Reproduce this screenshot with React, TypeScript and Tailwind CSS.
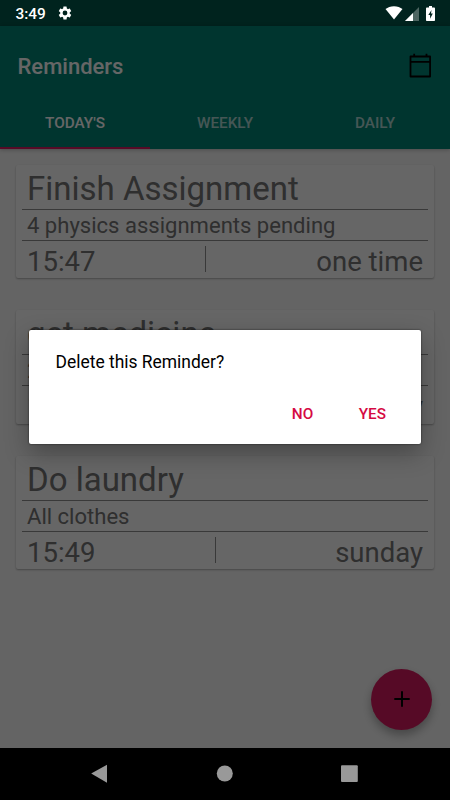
const reminders = [
    {
        title: "Finish Assignment",
        note: "4 physics assignments pending",
        time: "15:47",
        repeat: "one time",
    },
    {
        title: "get medicine",
        note: "2 tablets",
        time: "15:48",
        repeat: "daily",
    },
    {
        title: "Do laundry",
        note: "All clothes",
        time: "15:49",
        repeat: "sunday",
    },
];

const StatusBar = () => {
    return (
        <div className="relative z-20 h-[26px] flex items-center text-white pl-[15.5px] pr-[15.5px]">
            <span className="text-[15.4px] leading-none font-medium pt-[3px]">
                3:49
            </span>
            <svg
                className="w-4 h-4 ml-[11.5px]"
                viewBox="0 0 24 24"
                fill="currentColor"
            >
                <path d="M19.14 12.94c.04-.3.06-.61.06-.94 0-.32-.02-.64-.07-.94l2.03-1.58a.49.49 0 0 0 .12-.61l-1.92-3.32a.488.488 0 0 0-.59-.22l-2.39.96c-.5-.38-1.03-.7-1.62-.94l-.36-2.54a.484.484 0 0 0-.48-.41h-3.84c-.24 0-.43.17-.47.41l-.36 2.54c-.59.24-1.13.57-1.62.94l-2.39-.96c-.22-.08-.47 0-.59.22L2.74 8.87c-.12.21-.08.47.12.61l2.03 1.58c-.05.3-.09.63-.09.94s.02.64.07.94l-2.03 1.58a.49.49 0 0 0-.12.61l1.92 3.32c.12.22.37.29.59.22l2.39-.96c.5.38 1.03.7 1.62.94l.36 2.54c.05.24.24.41.48.41h3.84c.24 0 .44-.17.47-.41l.36-2.54c.59-.24 1.13-.56 1.62-.94l2.39.96c.22.08.47 0 .59-.22l1.92-3.32c.12-.22.07-.47-.12-.61l-2.01-1.58zM12 15.6A3.6 3.6 0 1 1 12 8.4a3.6 3.6 0 0 1 0 7.2z" />
            </svg>
            <div className="flex items-center ml-auto">
                <svg
                    className="w-[18px] h-[14px]"
                    viewBox="0 0 18 14"
                    fill="currentColor"
                >
                    <path d="M9 13.6 0.5 3.1C2.7 1.2 5.7 0.2 9 0.2s6.3 1 8.5 2.9z" />
                </svg>
                <svg
                    className="w-[14px] h-[14px] mt-px ml-[2px]"
                    viewBox="0 0 14 14"
                    fill="currentColor"
                >
                    <path d="M14 0v14H0z" opacity="0.3" />
                    <path d="M8 6v8H0z" />
                </svg>
                <svg
                    className="w-[9px] h-[15px] ml-[7px]"
                    viewBox="0 0 9 15"
                >
                    <path
                        d="M3 0h3v1.6h2.2q.8 0 .8.8v11.8q0 .8-.8.8H.8q-.8 0-.8-.8V2.4q0-.8.8-.8H3z"
                        fill="#fff"
                    />
                    <path d="M5.5 4 2.3 9h1.8v3.7L6.8 7.6H5z" fill="#00231e" />
                </svg>
            </div>
        </div>
    );
};

const ReminderCard = ({ title, note, time, repeat }: (typeof reminders)[0]) => {
    return (
        <div className="h-[113.5px] px-[6px] bg-white rounded-[2px] shadow-[0_1px_2px_rgba(0,0,0,0.3)] text-[#757575]">
            <h2 className="h-[45px] px-[5px] border-b border-[#8f8f8f] text-[33px] leading-[47.5px] whitespace-nowrap">
                {title}
            </h2>
            <p className="h-[31px] px-[5px] border-b border-[#8f8f8f] text-[22.05px] leading-[32.5px] whitespace-nowrap">
                {note}
            </p>
            <div className="h-[37px] px-[5px] flex justify-between items-center text-[27.5px] leading-[40px] whitespace-nowrap">
                <span className="pt-[5.5px]">{time}</span>
                <span className="w-px h-[26px] bg-[#8f8f8f]"></span>
                <span className="pt-[5.5px]">{repeat}</span>
            </div>
        </div>
    );
};

const App = () => {
    return (
        <div className="relative w-[450px] h-[800px] overflow-hidden flex flex-col bg-[#fafafa] font-['Roboto',sans-serif]">
            <div className="bg-[#00574b]">
                <StatusBar />
            </div>
            <header className="h-[122.5px] shrink-0 bg-[#008577] text-white shadow-[0_1px_4px_rgba(0,0,0,0.25)]">
                <div className="h-[70px] pt-[10px] pl-[17.5px] pr-[18px] flex items-center justify-between">
                    <h1 className="pt-px text-[22px] font-medium">Reminders</h1>
                    <svg
                        className="w-[23px] h-[25px] mt-[-1px] text-black"
                        viewBox="0 0 23 25"
                        fill="none"
                        stroke="currentColor"
                        strokeWidth="1.8"
                        strokeLinejoin="round"
                    >
                        <path d="M1.5 3.5h19.6v20H1.5z" />
                        <path d="M1.5 8.8h19.6M5.2 0.8v3M17.5 0.8v3" />
                    </svg>
                </div>
                <nav className="grid grid-cols-3 h-[52.5px] text-[15.3px] font-medium text-center leading-[55px]">
                    <span className="h-[52.5px] border-b-2 border-[#d81b60]">
                        TODAY'S
                    </span>
                    <span className="h-[52.5px] text-white/70">WEEKLY</span>
                    <span className="h-[52.5px] text-white/70">DAILY</span>
                </nav>
            </header>
            <main className="flex-1 flex flex-col gap-[32px] px-[16px] pt-[16.2px]">
                {reminders.map((reminder) => (
                    <ReminderCard key={reminder.title} {...reminder} />
                ))}
            </main>
            <button className="absolute right-[18px] bottom-[70.5px] w-[61px] h-[61px] rounded-full bg-[#d81b60] flex items-center justify-center shadow-[0_5px_10px_rgba(0,0,0,0.3)]">
                <svg
                    className="w-4 h-4"
                    viewBox="0 0 16 16"
                    stroke="#000"
                    strokeWidth="2"
                >
                    <path d="M8 0.3v15.4M0.3 8h15.4" />
                </svg>
            </button>
            <nav className="h-[52px] shrink-0 bg-black"></nav>

            {/* scrim */}
            <div className="absolute inset-0 z-10 bg-black/60"></div>

            {/* delete dialog */}
            <div className="absolute z-20 left-[29px] top-[329.5px] w-[392px] h-[114px] bg-white rounded-[2px] shadow-[0_0_2px_rgba(0,0,0,0.7),0_9px_24px_rgba(0,0,0,0.3)]">
                <p className="pl-[26.5px] pt-[19px] text-[17.45px] leading-[26px] text-black">
                    Delete this Reminder?
                </p>
                <div className="flex justify-end gap-[45.5px] pr-[35px] pt-[26px] text-[15.3px] leading-[26px] font-medium text-[#d50a43]">
                    <button>NO</button>
                    <button>YES</button>
                </div>
            </div>

            {/* system navigation */}
            <div className="absolute z-20 inset-x-0 bottom-0 h-[52px] text-[#999]">
                <svg
                    className="w-full h-full"
                    viewBox="0 0 450 52"
                    fill="currentColor"
                >
                    <path d="M91.2 25.5 107 16.7v18z" />
                    <circle cx="224.8" cy="25.5" r="8" />
                    <rect x="341" y="17.3" width="16.8" height="16.8" rx="1" />
                </svg>
            </div>
        </div>
    );
};

export default App;
